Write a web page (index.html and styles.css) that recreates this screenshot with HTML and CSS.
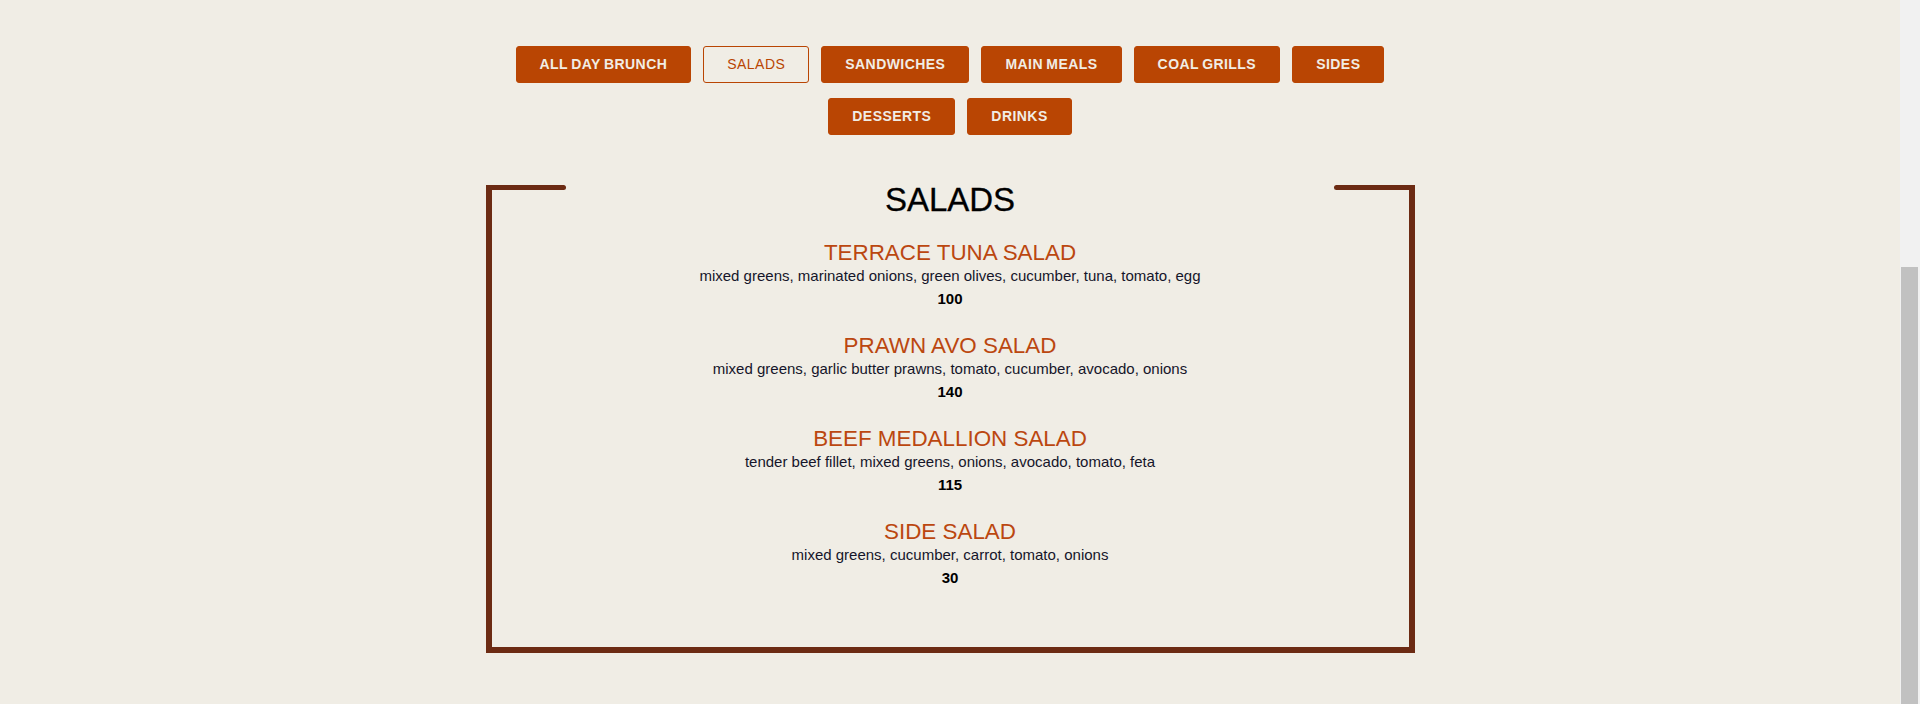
FILE: index.html
```html
<!DOCTYPE html>
<html lang="en">
<head>
<meta charset="utf-8">
<title>Menu - Salads</title>
<link rel="stylesheet" href="styles.css">
</head>
<body>
<div class="page">
  <main class="menu">
    <nav class="tabs">
      <button class="tab">ALL DAY BRUNCH</button>
      <button class="tab tab-active">SALADS</button>
      <button class="tab">SANDWICHES</button>
      <button class="tab">MAIN MEALS</button>
      <button class="tab">COAL GRILLS</button>
      <button class="tab">SIDES</button>
      <button class="tab">DESSERTS</button>
      <button class="tab">DRINKS</button>
    </nav>
    <section class="card">
      <h2 class="card-title">SALADS</h2>
      <ul class="items">
        <li class="item">
          <h3 class="item-name">TERRACE TUNA SALAD</h3>
          <p class="item-desc">mixed greens, marinated onions, green olives, cucumber, tuna, tomato, egg</p>
          <p class="item-price">100</p>
        </li>
        <li class="item">
          <h3 class="item-name">PRAWN AVO SALAD</h3>
          <p class="item-desc">mixed greens, garlic butter prawns, tomato, cucumber, avocado, onions</p>
          <p class="item-price">140</p>
        </li>
        <li class="item">
          <h3 class="item-name">BEEF MEDALLION SALAD</h3>
          <p class="item-desc">tender beef fillet, mixed greens, onions, avocado, tomato, feta</p>
          <p class="item-price">115</p>
        </li>
        <li class="item">
          <h3 class="item-name">SIDE SALAD</h3>
          <p class="item-desc">mixed greens, cucumber, carrot, tomato, onions</p>
          <p class="item-price">30</p>
        </li>
      </ul>
    </section>
  </main>
  <div class="scrollbar" aria-hidden="true"><div class="scrollbar-thumb"></div></div>
</div>
</body>
</html>
```

FILE: styles.css
```css
html {
  background: #f0ede5;
}

body {
  margin: 0;
  background: #f0ede5;
  font-family: "Liberation Sans", Arial, sans-serif;
  color: #111;
}

.page {
  display: flex;
  height: 100vh;
  overflow: hidden;
}

.menu {
  flex: 1;
  min-width: 0;
}

.scrollbar {
  width: 20px;
  flex: none;
  box-sizing: border-box;
  padding: 267px 2px 0 1px;
  background: #f1f1f1;
}

.scrollbar-thumb {
  height: 437px;
  background: #c1c1c1;
}

.tabs {
  width: 929px;
  margin: 46px auto 0;
  display: flex;
  flex-wrap: wrap;
  justify-content: center;
  column-gap: 12px;
  row-gap: 15px;
}

.tab {
  height: 37px;
  padding: 0 23px;
  border: 1px solid #b94503;
  border-radius: 3px;
  background: #b94503;
  color: #f1ede5;
  font-family: "Liberation Sans", Arial, sans-serif;
  font-size: 14px;
  font-weight: 700;
  letter-spacing: 0.45px;
  word-spacing: -1px;
  line-height: 35px;
  cursor: pointer;
}

.tab-active {
  background: transparent;
  color: #b94503;
  font-weight: 400;
}

.card {
  position: relative;
  width: 929px;
  box-sizing: border-box;
  margin: 50px auto 0;
  border: 6px solid #6c2b13;
  border-top: 0;
  padding-bottom: 60px;
  text-align: center;
}

.card::before,
.card::after {
  content: "";
  position: absolute;
  top: 0;
  height: 5px;
  background: #6c2b13;
}

.card::before {
  left: -6px;
  width: 80px;
  border-radius: 0 3px 3px 0;
}

.card::after {
  right: -6px;
  width: 81px;
  border-radius: 3px 0 0 3px;
}

.card-title {
  margin: 0 0 25px;
  font-size: 33px;
  font-weight: 400;
  line-height: 30px;
  color: #000;
  -webkit-text-stroke: 0.3px #000;
}

.items {
  list-style: none;
  margin: 0;
  padding: 0;
  display: flex;
  flex-direction: column;
  gap: 25px;
}

.item-name {
  margin: 0 0 2px;
  font-size: 22.4px;
  font-weight: 400;
  line-height: 25px;
  color: #bb4710;
}

.item-desc {
  margin: 0 0 5px;
  font-size: 15px;
  line-height: 18px;
  color: #15152a;
}

.item-price {
  margin: 0;
  font-size: 15px;
  font-weight: 700;
  line-height: 18px;
  color: #000;
}
```
